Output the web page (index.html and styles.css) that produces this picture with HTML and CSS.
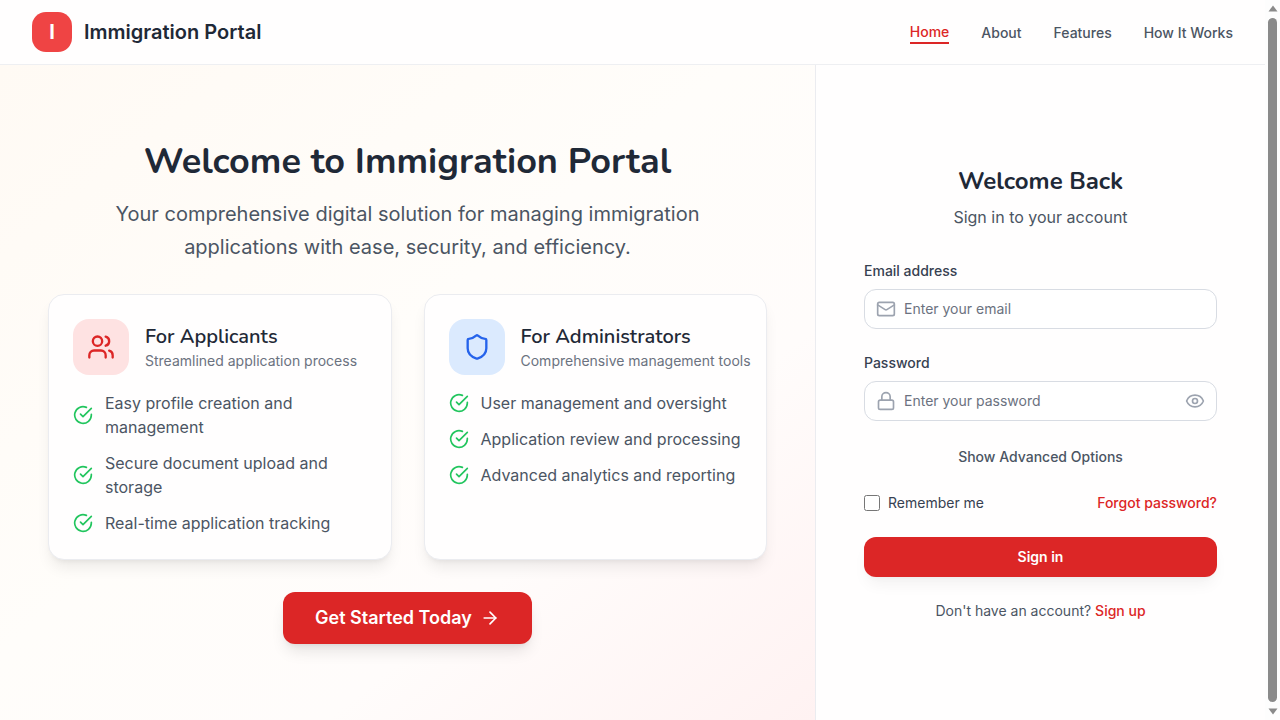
FILE: index.html
```html
<!DOCTYPE html>
<html lang="en">
<head>
<meta charset="utf-8">
<meta name="viewport" content="width=device-width, initial-scale=1">
<title>Immigration Portal</title>
<link rel="stylesheet" href="styles.css">
</head>
<body>
<svg class="sprite" aria-hidden="true">
  <symbol id="check" viewBox="0 0 24 24"><path d="M22 11.08V12a10 10 0 1 1-5.93-9.14"/><path d="m9 11 3 3L22 4"/></symbol>
</svg>
<div class="window">
  <div class="page">
    <header class="header">
      <a class="brand" href="#"><span class="logo">I</span><span>Immigration Portal</span></a>
      <nav class="nav">
        <a class="active" href="#">Home</a>
        <a href="#">About</a>
        <a href="#">Features</a>
        <a href="#">How It Works</a>
      </nav>
    </header>
    <main class="main">
      <section class="hero">
        <h1>Welcome to Immigration Portal</h1>
        <p class="lead">Your comprehensive digital solution for managing immigration applications with ease, security, and efficiency.</p>
        <div class="cards">
          <article class="card">
            <div class="card-head">
              <div class="tile red"><svg class="icon" viewBox="0 0 24 24"><path d="M16 21v-2a4 4 0 0 0-4-4H6a4 4 0 0 0-4 4v2"/><circle cx="9" cy="7" r="4"/><path d="M22 21v-2a4 4 0 0 0-3-3.87"/><path d="M16 3.13a4 4 0 0 1 0 7.75"/></svg></div>
              <div><h2>For Applicants</h2><p>Streamlined application process</p></div>
            </div>
            <ul>
              <li><svg class="icon"><use href="#check"/></svg><span>Easy profile creation and management</span></li>
              <li><svg class="icon"><use href="#check"/></svg><span>Secure document upload and storage</span></li>
              <li><svg class="icon"><use href="#check"/></svg><span>Real-time application tracking</span></li>
            </ul>
          </article>
          <article class="card">
            <div class="card-head">
              <div class="tile blue"><svg class="icon" viewBox="0 0 24 24"><path d="M20 13c0 5-3.5 7.5-7.66 8.95a1 1 0 0 1-.67-.01C7.5 20.5 4 18 4 13V6a1 1 0 0 1 1-1c2 0 4.5-1.2 6.24-2.72a1.17 1.17 0 0 1 1.52 0C14.51 3.81 17 5 19 5a1 1 0 0 1 1 1z"/></svg></div>
              <div><h2>For Administrators</h2><p>Comprehensive management tools</p></div>
            </div>
            <ul>
              <li><svg class="icon"><use href="#check"/></svg><span>User management and oversight</span></li>
              <li><svg class="icon"><use href="#check"/></svg><span>Application review and processing</span></li>
              <li><svg class="icon"><use href="#check"/></svg><span>Advanced analytics and reporting</span></li>
            </ul>
          </article>
        </div>
        <button class="cta" type="button">Get Started Today <svg class="icon" viewBox="0 0 24 24"><path d="M5 12h14"/><path d="m12 5 7 7-7 7"/></svg></button>
      </section>
      <section class="login">
        <h2>Welcome Back</h2>
        <p class="sub">Sign in to your account</p>
        <form>
          <div class="field">
            <label for="email">Email address</label>
            <div class="box">
              <svg class="icon" viewBox="0 0 24 24"><rect x="2" y="4" width="20" height="16" rx="2"/><path d="m2 7 8.97 5.7a1.94 1.94 0 0 0 2.06 0L22 7"/></svg>
              <input id="email" type="email" placeholder="Enter your email">
            </div>
          </div>
          <div class="field">
            <label for="password">Password</label>
            <div class="box">
              <svg class="icon" viewBox="0 0 24 24"><rect x="3" y="11" width="18" height="11" rx="2"/><path d="M7 11V7a5 5 0 0 1 10 0v4"/></svg>
              <input id="password" type="password" placeholder="Enter your password">
              <button class="eye" type="button" aria-label="Show password"><svg class="icon" viewBox="0 0 24 24"><path d="M2.06 12.35a1 1 0 0 1 0-.7 10.75 10.75 0 0 1 19.88 0 1 1 0 0 1 0 .7 10.75 10.75 0 0 1-19.88 0"/><circle cx="12" cy="12" r="3"/></svg></button>
            </div>
          </div>
          <button class="advanced" type="button">Show Advanced Options</button>
          <div class="row">
            <label class="remember" for="remember"><input id="remember" type="checkbox">Remember me</label>
            <a href="#">Forgot password?</a>
          </div>
          <button class="submit" type="submit">Sign in</button>
          <p class="signup">Don't have an account? <a href="#">Sign up</a></p>
        </form>
      </section>
    </main>
  </div>
  <div class="scrollbar" aria-hidden="true">
    <svg viewBox="0 0 10 7"><path d="M5 .5 9.500 6.500H.5Z"/></svg>
    <div class="thumb"></div>
    <svg viewBox="0 0 10 7"><path d="M5 6.500 9.500.5H.5Z"/></svg>
  </div>
</div>
</body>
</html>
```
FILE: styles.css
```css
* { box-sizing: border-box; }
body, h1, h2, p, ul { margin: 0; padding: 0; }
body { font-family: Inter, "Liberation Sans", sans-serif; color: #1f2937; background: #fffefe; }
a { color: #dc2626; text-decoration: none; font-weight: 500; }
button, input { font: inherit; }
button { border: 0; padding: 0; cursor: pointer; }
.sprite { position: absolute; width: 0; height: 0; }
.icon { width: 20px; height: 20px; flex: none; fill: none; stroke: currentColor; stroke-width: 2; stroke-linecap: round; stroke-linejoin: round; }

.window { display: flex; min-height: 100vh; }
.page { flex: 1; min-width: 0; display: flex; flex-direction: column; }

.header { display: flex; align-items: center; justify-content: space-between; min-height: 65px; padding: 0 32px; border-bottom: 1px solid #eeeff2; }
.brand { display: flex; align-items: center; gap: 12px; font-size: 20px; line-height: 28px; font-weight: 600; color: #1f2937; }
.logo { display: grid; place-items: center; width: 40px; height: 40px; border-radius: 14px; background: #ef4444; color: #fff; font-weight: 700; }
.nav { display: flex; align-items: center; gap: 32px; padding-top: 2px; font-size: 14px; line-height: 20px; }
.nav a { color: #4b5563; }
.nav .active { color: #dc2626; border-bottom: 2px solid #dc2626; }

.main { flex: 1; display: flex; }
.hero { flex: 1; display: flex; flex-direction: column; align-items: center; justify-content: center; padding: 48px; background: linear-gradient(to bottom right, #fffaf4, #fffdfa 45%, #fffcfb 70%, #fff2f2); }
h1, h2 { font-family: Nunito, Lato, "Open Sans", sans-serif; }
h1 { font-size: 36px; line-height: 42px; font-weight: 700; margin-bottom: 15px; text-align: center; }
.lead { max-width: 640px; font-size: 20px; line-height: 33px; color: #4b5563; text-align: center; margin-bottom: 30px; }
.cards { display: grid; grid-template-columns: repeat(2, minmax(0, 1fr)); gap: 32px; width: 100%; margin-bottom: 32px; }
.card { padding: 24px; border: 1px solid #ebecf0; border-radius: 16px; background: #fffefe; box-shadow: 0 10px 15px -3px rgba(0,0,0,.08), 0 4px 6px -4px rgba(0,0,0,.08); }
.card-head { display: flex; align-items: center; gap: 16px; margin-bottom: 16px; }
.card-head h2 { font-size: 20px; line-height: 28px; font-weight: 600; }
.card-head p { font-size: 14px; line-height: 20px; color: #6b7280; white-space: nowrap; }
.tile { display: grid; place-items: center; width: 56px; height: 56px; border-radius: 16px; flex: none; }
.tile .icon { width: 28px; height: 28px; }
.red { background: #fee2e2; color: #dc2626; }
.blue { background: #dbeafe; color: #2563eb; }
.card ul { display: grid; gap: 12px; list-style: none; }
.card li { display: flex; align-items: center; gap: 12px; font-size: 16px; line-height: 24px; color: #4b5563; }
.card li .icon { color: #22c55e; }
.cta { display: flex; align-items: center; gap: 8px; padding: 12px 32px; border-radius: 12px; background: #dc2626; color: #fff; font-size: 18px; line-height: 28px; font-weight: 600; box-shadow: 0 10px 15px -3px rgba(0,0,0,.1), 0 4px 6px -4px rgba(0,0,0,.1); }

.login { width: 450px; padding: 48px; border-left: 1px solid #ebecf0; display: flex; flex-direction: column; justify-content: center; }
.login h2 { font-size: 24px; line-height: 32px; font-weight: 700; text-align: center; margin-bottom: 8px; }
.sub { font-size: 16px; line-height: 24px; color: #4b5563; text-align: center; margin-bottom: 32px; }
form { display: flex; flex-direction: column; gap: 24px; font-size: 14px; line-height: 20px; }
.field { display: grid; gap: 8px; }
.field label { font-weight: 500; color: #374151; }
.box { display: flex; align-items: center; gap: 8px; height: 40px; padding: 0 11px; border: 1px solid #d8dce3; border-radius: 12px; background: #fff; color: #9ca3af; }
.box input { flex: 1; min-width: 0; padding: 0; border: 0; outline: 0; background: none; color: #1f2937; }
.box input::placeholder { color: #6b7280; }
.eye { display: grid; background: none; color: inherit; }
.advanced { align-self: center; line-height: 24px; font-weight: 500; color: #4b5563; background: none; }
.row { display: flex; align-items: center; justify-content: space-between; }
.remember { display: flex; align-items: center; gap: 8px; color: #374151; }
.remember input { width: 16px; height: 16px; margin: 0; }
.submit { height: 40px; border-radius: 12px; background: #dc2626; color: #fff; font-weight: 600; box-shadow: 0 10px 15px -3px rgba(0,0,0,.05), 0 4px 6px -4px rgba(0,0,0,.05); }
.signup { text-align: center; color: #4b5563; }

.scrollbar { position: sticky; top: 0; width: 15px; height: 100vh; display: flex; flex-direction: column; align-items: center; gap: 6px; padding: 5px 0; background: #fdfdfd; }
.scrollbar svg { width: 10px; height: 7px; fill: #8a8a8a; flex: none; }
.thumb { flex: 1; width: 9px; border-radius: 5px; background: #8a8a8a; }
```
